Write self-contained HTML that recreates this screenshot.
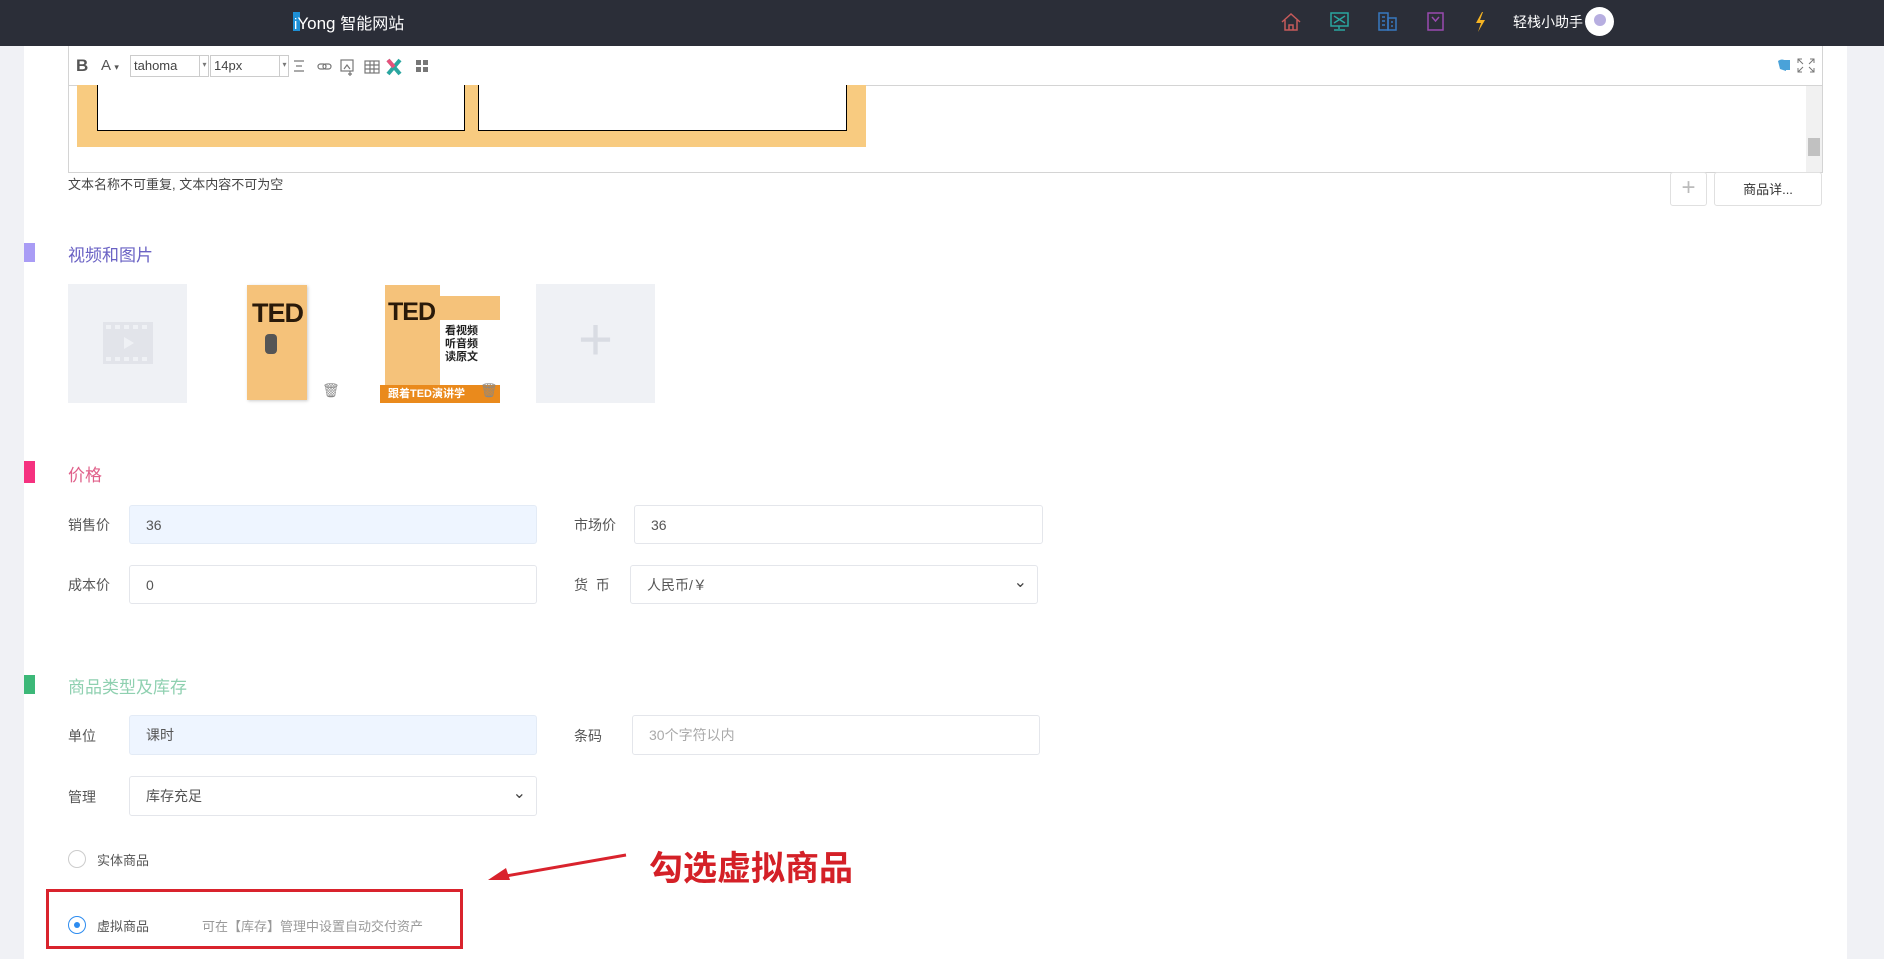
<!DOCTYPE html>
<html><head><meta charset="utf-8"><style>
*{margin:0;padding:0;box-sizing:border-box}
body{width:1884px;height:959px;overflow:hidden;background:#fff;font-family:"Liberation Sans","Noto Sans CJK SC",sans-serif;position:relative;color:#555;font-size:14px}
.a{position:absolute}
.hdr{left:0;top:0;width:1884px;height:46px;background:#2b2e38}
.inp{position:absolute;border:1px solid #e4e6eb;border-radius:3px;background:#fff;font-size:14px;color:#555;padding-left:16px;display:flex;align-items:center}
.blue{background:#eef5ff;border-color:#e3ebf6}
.lbl{position:absolute;font-size:14px;color:#555}
.sel:after{content:"⌄";position:absolute;right:10px;top:6px;font-size:16px;color:#444}
.mk{position:absolute;left:24px;width:11px}
.st{position:absolute;left:68px;font-size:17px}
</style></head><body>
<div class="a" style="left:0;top:46px;width:24px;height:913px;background:#f0f1f5"></div>
<div class="a" style="left:1847px;top:46px;width:37px;height:913px;background:#f0f1f5"></div>

<!-- editor -->
<div class="a" style="left:68px;top:40px;width:1755px;height:133px;border:1px solid #d4d4d4;background:#fff"></div>
<div class="a" style="left:69px;top:85px;width:1753px;height:1px;background:#d4d4d4"></div>
<div class="a" style="left:77px;top:40px;width:789px;height:107px;background:#f8cb80"></div>
<div class="a" style="left:97px;top:40px;width:368px;height:91px;background:#fff;border:1px solid #000;border-top:none"></div>
<div class="a" style="left:478px;top:40px;width:369px;height:91px;background:#fff;border:1px solid #000;border-top:none"></div>
<div class="a" style="left:69px;top:46px;width:1753px;height:39px;background:#fff"></div>
<div class="a" style="left:76px;top:56px;font-size:17px;font-weight:bold;color:#555">B</div>
<div class="a" style="left:101px;top:57px;font-size:15px;color:#555">A <span style="font-size:9px">▾</span></div>
<div class="a" style="left:130px;top:55px;width:79px;height:22px;border:1px solid #ccc;font-family:'Liberation Sans';font-size:13px;padding:2px 3px;color:#444">tahoma</div>
<div class="a" style="left:199px;top:55px;width:10px;height:22px;border-left:1px solid #ccc;font-size:8px;color:#777;padding-top:5px;text-align:center">▾</div>
<div class="a" style="left:210px;top:55px;width:79px;height:22px;border:1px solid #ccc;font-size:13px;padding:2px 3px;color:#444">14px</div>
<div class="a" style="left:279px;top:55px;width:10px;height:22px;border-left:1px solid #ccc;font-size:8px;color:#777;padding-top:5px;text-align:center">▾</div>
<svg class="a" style="left:292px;top:57px" width="140" height="20">
<g stroke="#777" fill="none" stroke-width="1.2"><path d="M2 4h10M4 9h6M2 14h10"/><rect x="26" y="7" width="8" height="5" rx="2.5"/><rect x="31" y="7" width="8" height="5" rx="2.5"/><rect x="49" y="3" width="12" height="11"/><path d="M52 12l3-4 3 4M58 14v5M56 17h4" /><rect x="73" y="4" width="14" height="12"/><path d="M73 8h14M73 12h14M78 4v12M82 4v12"/></g>
<path d="M96 3l12 14M108 3l-12 14" stroke="#2aa6a0" stroke-width="4"/><path d="M96 3l6 7" stroke="#e8507a" stroke-width="4"/>
<g fill="#777"><rect x="124" y="3" width="5" height="5"/><rect x="131" y="3" width="5" height="5"/><rect x="124" y="10" width="5" height="5"/><rect x="131" y="10" width="5" height="5"/></g>
</svg>
<svg class="a" style="left:1776px;top:57px" width="40" height="18"><path d="M2 4q4-3 8 0v10l-6-2z M8 3h6v10h-6z" fill="#4aa2d9"/><g stroke="#777" fill="none"><path d="M26 2h-4v4M34 2h4v4M26 15h-4v-4M34 15h4v-4M22 2l5 5M38 2l-5 5M22 15l5-5M38 15l-5-5"/></g></svg>
<div class="a" style="left:1806px;top:86px;width:16px;height:86px;background:#f1f1f1"></div>
<div class="a" style="left:1808px;top:138px;width:12px;height:18px;background:#c1c1c1"></div>
<div class="a" style="left:68px;top:174px;font-size:13px;color:#444">文本名称不可重复, 文本内容不可为空</div>
<div class="a" style="left:1670px;top:172px;width:37px;height:34px;border:1px solid #e0e0e0;border-radius:3px;color:#bbb;font-size:24px;text-align:center;line-height:30px;font-weight:200">+</div>
<div class="a" style="left:1714px;top:172px;width:108px;height:34px;border:1px solid #e0e0e0;border-radius:3px;color:#333;font-size:13px;text-align:center;line-height:34px">商品详...</div>

<!-- header -->
<div class="a hdr"></div>
<div class="a" style="left:293px;top:12px;width:7px;height:19px;background:#1e90d6"></div>
<div class="a" style="left:294px;top:10px;color:#fff;font-size:17px;font-family:'Liberation Sans','Noto Sans CJK SC',sans-serif"><span style="color:#fff;font-size:15px">i</span>Yong <span style="font-size:16px">智能网站</span></div>
<svg class="a" style="left:1278px;top:8px" width="340" height="30">
<path d="M4 14l9-8 9 8M7 12v10h12V12M11 22v-5h4v5" stroke="#c65a5a" fill="none" stroke-width="1.5"/>
<g stroke="#2aa6a0" fill="none" stroke-width="1.5"><rect x="53" y="5" width="17" height="13"/><path d="M56 8l11 7M67 8l-11 7M61 18v3M56 22h11"/></g>
<g stroke="#3878c0" fill="none" stroke-width="1.5"><rect x="101" y="5" width="9" height="17"/><rect x="110" y="10" width="8" height="12"/><path d="M104 9h3M104 13h3M104 17h3M113 14h2M113 18h2"/></g>
<g stroke="#9a4ab0" fill="none" stroke-width="1.5"><rect x="150" y="5" width="15" height="17"/><path d="M154 9l3.5 4 3.5-4"/></g>
<path d="M204 4l-6 11h5l-3 9 7-12h-5l3-8z" fill="#f5b323"/>
</svg>
<div class="a" style="left:1513px;top:12px;color:#fff;font-size:14px">轻栈小助手</div>
<div class="a" style="left:1585px;top:7px;width:29px;height:29px;border-radius:50%;background:#fff"></div>
<div class="a" style="left:1594px;top:14px;width:12px;height:12px;border-radius:50%;background:#b7aee0"></div>

<!-- video & images -->
<div class="mk" style="top:243px;height:19px;background:#a99cf5"></div>
<div class="st" style="top:241px;color:#6a62c4">视频和图片</div>
<div class="a" style="left:68px;top:284px;width:119px;height:119px;background:#eff1f5"></div>
<svg class="a" style="left:103px;top:322px" width="50" height="42"><rect x="0" y="0" width="50" height="42" fill="#e2e4ea"/><g fill="#eff1f5"><rect x="3" y="3" width="5" height="4"/><rect x="12" y="3" width="5" height="4"/><rect x="21" y="3" width="5" height="4"/><rect x="30" y="3" width="5" height="4"/><rect x="39" y="3" width="5" height="4"/><rect x="3" y="35" width="5" height="4"/><rect x="12" y="35" width="5" height="4"/><rect x="21" y="35" width="5" height="4"/><rect x="30" y="35" width="5" height="4"/><rect x="39" y="35" width="5" height="4"/><path d="M21 15l10 6-10 6z"/></g></svg>
<div class="a" style="left:247px;top:285px;width:60px;height:115px;background:#f5c27a;box-shadow:1px 1px 3px #ccc"></div>
<div class="a" style="left:252px;top:298px;font-weight:bold;font-size:27px;color:#2a1a0a;letter-spacing:-1px">TED</div>
<div class="a" style="left:265px;top:334px;width:12px;height:20px;background:#555;border-radius:4px"></div>
<div class="a" style="left:322px;top:382px;font-size:14px;color:#888">🗑</div>
<div class="a" style="left:385px;top:285px;width:55px;height:100px;background:#f5c27a"></div>
<div class="a" style="left:388px;top:298px;font-weight:bold;font-size:25px;color:#2a1a0a;letter-spacing:-1px">TED</div>
<div class="a" style="left:440px;top:296px;width:60px;height:24px;background:#f5c27a"></div>
<div class="a" style="left:445px;top:325px;font-size:11px;font-weight:bold;color:#222;line-height:13px">看视频<br>听音频<br>读原文</div>
<div class="a" style="left:380px;top:385px;width:120px;height:18px;background:#ea8a1c;color:#fff;font-size:11px;font-weight:bold;padding-left:8px;line-height:18px">跟着TED演讲学</div>
<div class="a" style="left:480px;top:382px;font-size:14px;color:#888">🗑</div>
<div class="a" style="left:536px;top:284px;width:119px;height:119px;background:#eff1f5;color:#d9dce3;font-size:60px;text-align:center;line-height:112px;font-weight:100">+</div>

<!-- price -->
<div class="mk" style="top:461px;height:22px;background:#f5317f"></div>
<div class="st" style="top:461px;color:#e0608a">价格</div>
<div class="lbl" style="left:68px;top:515px">销售价</div>
<div class="inp blue" style="left:129px;top:505px;width:408px;height:39px">36</div>
<div class="lbl" style="left:574px;top:515px">市场价</div>
<div class="inp" style="left:634px;top:505px;width:409px;height:39px">36</div>
<div class="lbl" style="left:68px;top:575px">成本价</div>
<div class="inp" style="left:129px;top:565px;width:408px;height:39px">0</div>
<div class="lbl" style="left:574px;top:575px">货 &nbsp;币</div>
<div class="inp sel" style="left:630px;top:565px;width:408px;height:39px">人民币/￥</div>

<!-- type -->
<div class="mk" style="top:675px;height:19px;background:#3cb878"></div>
<div class="st" style="top:673px;color:#8fd0b0">商品类型及库存</div>
<div class="lbl" style="left:68px;top:726px">单位</div>
<div class="inp blue" style="left:129px;top:715px;width:408px;height:40px">课时</div>
<div class="lbl" style="left:574px;top:726px">条码</div>
<div class="inp" style="left:632px;top:715px;width:408px;height:40px;color:#aaa">30个字符以内</div>
<div class="lbl" style="left:68px;top:787px">管理</div>
<div class="inp sel" style="left:129px;top:776px;width:408px;height:40px">库存充足</div>
<div class="a" style="left:68px;top:850px;width:18px;height:18px;border:1px solid #ccc;border-radius:50%"></div>
<div class="lbl" style="left:97px;top:850px;font-size:13px">实体商品</div>
<div class="a" style="left:46px;top:889px;width:417px;height:60px;border:3px solid #d9232d"></div>
<div class="a" style="left:68px;top:916px;width:18px;height:18px;border:1px solid #2d8cf0;border-radius:50%"></div>
<div class="a" style="left:74px;top:922px;width:6px;height:6px;background:#2d8cf0;border-radius:50%"></div>
<div class="lbl" style="left:97px;top:916px;font-size:13px">虚拟商品</div>
<div class="lbl" style="left:202px;top:916px;font-size:13px;color:#999">可在【库存】管理中设置自动交付资产</div>
<svg class="a" style="left:480px;top:850px" width="150" height="40"><path d="M146 5L20 27" stroke="#d9232d" stroke-width="3"/><path d="M8 30l18-12 4 12z" fill="#d9232d"/></svg>
<div class="a" style="left:649px;top:841px;font-size:34px;font-weight:bold;color:#d42027">勾选虚拟商品</div>
</body></html>
